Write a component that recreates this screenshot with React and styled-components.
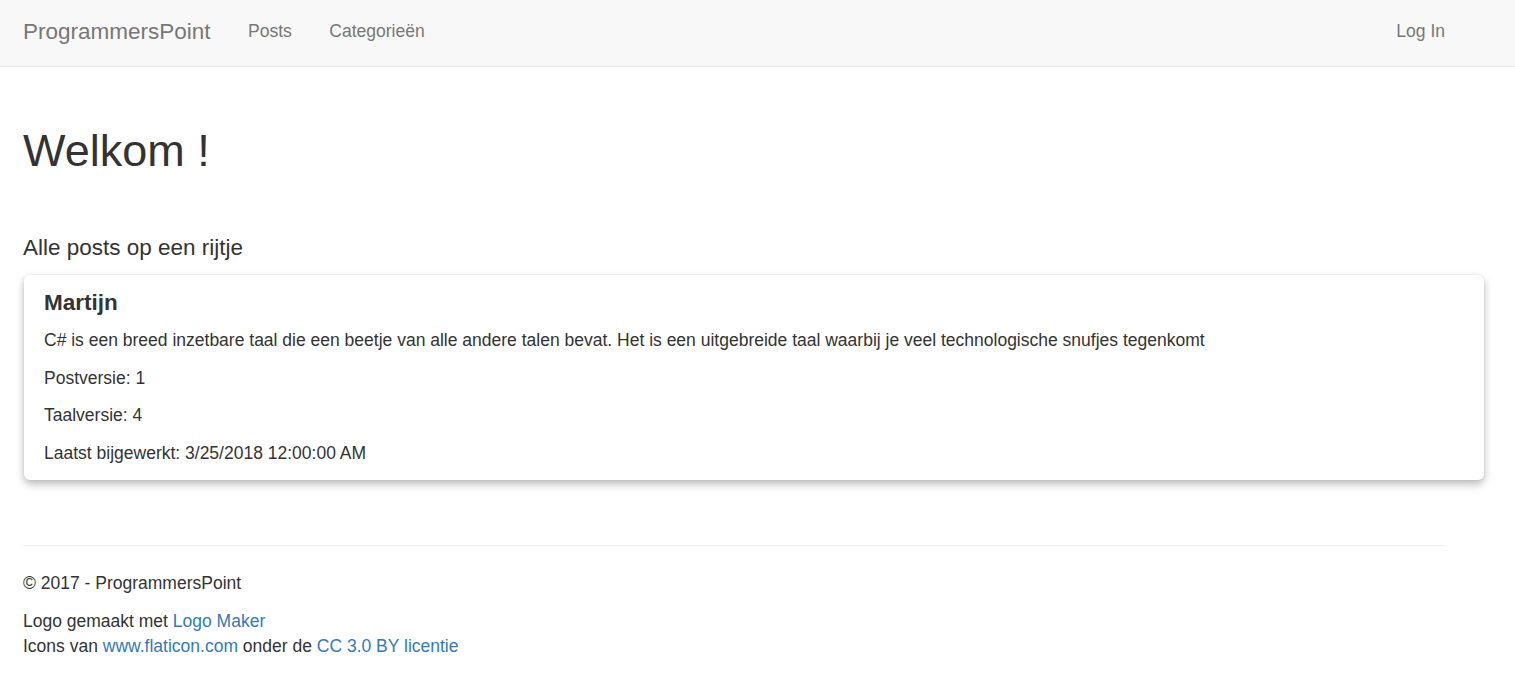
import styled, { createGlobalStyle } from "styled-components";

const GlobalStyle = createGlobalStyle`
  html, body {
    margin: 0;
    padding: 0;
    background: #fff;
  }
  body {
    font-family: "Liberation Sans", Arial, Helvetica, sans-serif;
    font-size: 17.5px;
    line-height: 25px;
    color: #333;
  }
  * {
    box-sizing: border-box;
  }
`;

const Navbar = styled.nav`
  height: 67px;
  background-color: #f8f8f8;
  border-bottom: 1px solid #e7e7e7;
  display: flex;
  align-items: center;
  padding: 0 70px 4px 23px;
`;

const Brand = styled.a`
  font-size: 22.5px;
  color: #777;
  text-decoration: none;
  margin-right: 18.75px;
`;

const NavList = styled.ul`
  display: flex;
  list-style: none;
  margin: 0;
  padding: 0;
  margin-left: ${(p) => (p.right ? "auto" : "0")};
`;

const NavLink = styled.a`
  display: block;
  padding: 0 18.75px;
  color: #777;
  text-decoration: none;
  font-size: 17.5px;
  ${(p) => p.last && "padding-right: 0;"}
`;

const Main = styled.main`
  padding: 0 23px;
`;

const Title = styled.h1`
  font-size: 45px;
  font-weight: 500;
  line-height: 49.5px;
  margin: 59px 0 0;
`;

const SubTitle = styled.h4`
  font-size: 22.5px;
  font-weight: 500;
  line-height: 24.75px;
  margin: 60px 0 15px;
`;

const Card = styled.div`
  margin-left: 1px;
  margin-right: 8px;
  background: #fff;
  border-radius: 6px;
  box-shadow: 0 4px 8px rgba(0, 0, 0, 0.28), 0 0 2px rgba(0, 0, 0, 0.08);
  padding: 3px 20px 2px;
`;

const Author = styled.h4`
  font-size: 22.5px;
  font-weight: 700;
  line-height: 24.75px;
  margin: 12.5px 0;
`;

const Line = styled.p`
  margin: 0 0 12.5px;
`;

const Footer = styled.footer`
  margin-right: 47px;
`;

const Rule = styled.hr`
  border: 0;
  border-top: 1px solid #eee;
  margin: 65px 0 25px;
`;

const Text = styled.p`
  margin: 0 0 12.5px;
`;

const Link = styled.a`
  color: #337ab7;
  text-decoration: none;
`;

const App = () => {
  return (
    <>
      <GlobalStyle />
      <Navbar>
        <Brand href="#">ProgrammersPoint</Brand>
        <NavList>
          <li>
            <NavLink href="#">Posts</NavLink>
          </li>
          <li>
            <NavLink href="#">Categorieën</NavLink>
          </li>
        </NavList>
        <NavList right>
          <li>
            <NavLink href="#" last>
              Log In
            </NavLink>
          </li>
        </NavList>
      </Navbar>
      <Main>
        <Title>Welkom !</Title>
        <SubTitle>Alle posts op een rijtje</SubTitle>
        <Card>
          <Author>Martijn</Author>
          <Line>
            C# is een breed inzetbare taal die een beetje van alle andere talen
            bevat. Het is een uitgebreide taal waarbij je veel technologische
            snufjes tegenkomt
          </Line>
          <Line>Postversie: 1</Line>
          <Line>Taalversie: 4</Line>
          <Line>Laatst bijgewerkt: 3/25/2018 12:00:00 AM</Line>
        </Card>
        <Footer>
          <Rule />
          <Text>© 2017 - ProgrammersPoint</Text>
          <Text>
            Logo gemaakt met <Link href="#">Logo Maker</Link>
            <br />
            Icons van <Link href="#">www.flaticon.com</Link> onder de{" "}
            <Link href="#">CC 3.0 BY licentie</Link>
          </Text>
        </Footer>
      </Main>
    </>
  );
};

export default App;
